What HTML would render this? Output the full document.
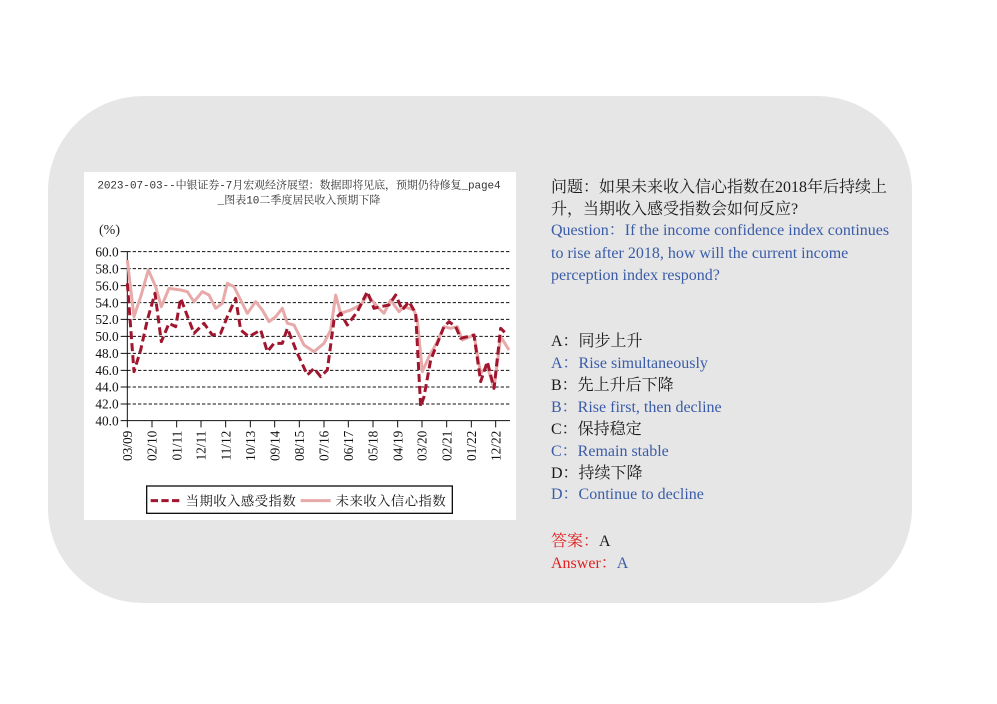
<!DOCTYPE html>
<html><head><meta charset="utf-8"><style>
body{margin:0;width:997px;height:704px;background:#fff;position:relative;overflow:hidden;font-family:"Liberation Serif","Noto Serif CJK SC",serif}
.card{position:absolute;left:48px;top:96px;width:864px;height:507px;background:#e6e6e6;border-radius:95px}
.chart{position:absolute;left:84px;top:172px;width:432px;height:348px;background:#fff}
.t{position:absolute;left:551px;font-size:16px;line-height:22px;white-space:nowrap}
.k{color:#1a1a1a}.b{color:#3a5ca8}.r{color:#e02020}
</style></head><body>
<div class="card"></div>
<div class="chart"></div>
<svg style="position:absolute;left:84px;top:170px" width="432" height="350" viewBox="0 0 1296 1050">
<g font-family="Liberation Mono, Noto Serif CJK SC, monospace" font-size="33" fill="#333">
<text x="645" y="55" text-anchor="middle" textLength="1210">2023-07-03--中银证券-7月宏观经济展望：数据即将见底，预期仍待修复_page4</text>
<text x="645" y="100" text-anchor="middle">_图表10二季度居民收入预期下降</text>
</g>
<text x="45" y="192" font-size="42" font-family="Liberation Serif, Noto Serif CJK SC, serif" fill="#222">(%)</text>
<g stroke="#111" stroke-width="3" stroke-dasharray="10,6">
<line x1="130" y1="245" x2="1278" y2="245"/><line x1="130" y1="296" x2="1278" y2="296"/><line x1="130" y1="347" x2="1278" y2="347"/><line x1="130" y1="398" x2="1278" y2="398"/><line x1="130" y1="448" x2="1278" y2="448"/><line x1="130" y1="499" x2="1278" y2="499"/><line x1="130" y1="550" x2="1278" y2="550"/><line x1="130" y1="601" x2="1278" y2="601"/><line x1="130" y1="651" x2="1278" y2="651"/><line x1="130" y1="702" x2="1278" y2="702"/>
</g>
<g stroke="#111" stroke-width="3"><line x1="130" y1="245" x2="130" y2="752"/><line x1="130" y1="752" x2="1278" y2="752"/>
<path d="M110 245h20M110 296h20M110 347h20M110 398h20M110 448h20M110 499h20M110 550h20M110 601h20M110 651h20M110 702h20M110 752h20"/>
<path d="M130 752v20M204 752v20M278 752v20M351 752v20M425 752v20M499 752v20M572 752v20M646 752v20M720 752v20M793 752v20M867 752v20M941 752v20M1014 752v20M1088 752v20M1162 752v20M1235 752v20"/></g>
<g font-family="Liberation Serif, serif" font-size="40" fill="#111" text-anchor="end">
<text x="104" y="259">60.0</text><text x="104" y="310">58.0</text><text x="104" y="361">56.0</text><text x="104" y="412">54.0</text><text x="104" y="462">52.0</text><text x="104" y="513">50.0</text><text x="104" y="564">48.0</text><text x="104" y="615">46.0</text><text x="104" y="665">44.0</text><text x="104" y="716">42.0</text><text x="104" y="766">40.0</text>
</g>
<g font-family="Liberation Serif, serif" font-size="40" fill="#111" text-anchor="end">
<text transform="translate(144,782) rotate(-90)">03/09</text><text transform="translate(218,782) rotate(-90)">02/10</text><text transform="translate(292,782) rotate(-90)">01/11</text><text transform="translate(365,782) rotate(-90)">12/11</text><text transform="translate(439,782) rotate(-90)">11/12</text><text transform="translate(513,782) rotate(-90)">10/13</text><text transform="translate(586,782) rotate(-90)">09/14</text><text transform="translate(660,782) rotate(-90)">08/15</text><text transform="translate(734,782) rotate(-90)">07/16</text><text transform="translate(807,782) rotate(-90)">06/17</text><text transform="translate(881,782) rotate(-90)">05/18</text><text transform="translate(955,782) rotate(-90)">04/19</text><text transform="translate(1028,782) rotate(-90)">03/20</text><text transform="translate(1102,782) rotate(-90)">02/21</text><text transform="translate(1176,782) rotate(-90)">01/22</text><text transform="translate(1249,782) rotate(-90)">12/22</text>
</g>
<polyline fill="none" stroke="#e8a9a9" stroke-width="9" stroke-linejoin="round" points="130,270 150,440 170,380 193,300 215,350 232,410 255,355 290,360 310,365 330,395 355,365 375,375 395,415 415,400 430,340 450,350 470,390 490,430 515,395 535,420 555,455 575,440 595,415 610,460 630,465 660,525 690,545 720,520 740,480 755,375 770,430 800,420 830,405 850,375 880,410 900,430 920,390 945,425 960,410 990,420 1000,450 1015,605 1035,560 1060,515 1080,470 1100,475 1120,470 1135,510 1170,495 1190,610 1210,590 1230,655 1250,500 1275,540"/>
<polyline fill="none" stroke="#a0162e" stroke-width="9" stroke-dasharray="24,12" stroke-linejoin="round" points="130,340 150,605 170,540 190,450 213,370 232,515 255,460 275,470 290,385 330,490 360,460 385,495 410,490 430,440 455,385 470,480 495,500 530,480 550,545 570,520 595,520 610,475 640,550 670,615 690,595 710,620 730,600 750,450 770,430 790,465 820,425 850,365 870,415 890,410 915,405 935,375 955,420 975,395 995,430 1010,710 1020,680 1040,570 1060,520 1080,470 1095,455 1115,470 1130,505 1170,495 1190,635 1210,575 1230,655 1250,475 1270,495"/>
<rect x="188" y="948" width="917" height="82" fill="#fff" stroke="#111" stroke-width="4"/>
<line x1="200" y1="992" x2="290" y2="992" stroke="#a0162e" stroke-width="9" stroke-dasharray="22,10"/>
<line x1="650" y1="992" x2="740" y2="992" stroke="#e8a9a9" stroke-width="9"/>
<g font-family="Noto Serif CJK SC, serif" font-size="40" fill="#111"><text x="305" y="1007" textLength="330">当期收入感受指数</text><text x="755" y="1007" textLength="330">未来收入信心指数</text></g>
</svg>
<div class="t k" style="top:177px">问题：如果未来收入信心指数在2018年后持续上</div>
<div class="t k" style="top:199px">升，当期收入感受指数会如何反应?</div>
<div class="t b" style="top:220px">Question：If the income confidence index continues</div>
<div class="t b" style="top:243px">to rise after 2018, how will the current income</div>
<div class="t b" style="top:265px">perception index respond?</div>
<div class="t k" style="top:331px">A：同步上升</div>
<div class="t b" style="top:353px">A：Rise simultaneously</div>
<div class="t k" style="top:375px">B：先上升后下降</div>
<div class="t b" style="top:397px">B：Rise first, then decline</div>
<div class="t k" style="top:419px">C：保持稳定</div>
<div class="t b" style="top:441px">C：Remain stable</div>
<div class="t k" style="top:463px">D：持续下降</div>
<div class="t b" style="top:484px">D：Continue to decline</div>
<div class="t" style="top:531px"><span class="r">答案：</span><span class="k">A</span></div>
<div class="t" style="top:553px"><span class="r">Answer：</span><span class="b">A</span></div>
</body></html>
